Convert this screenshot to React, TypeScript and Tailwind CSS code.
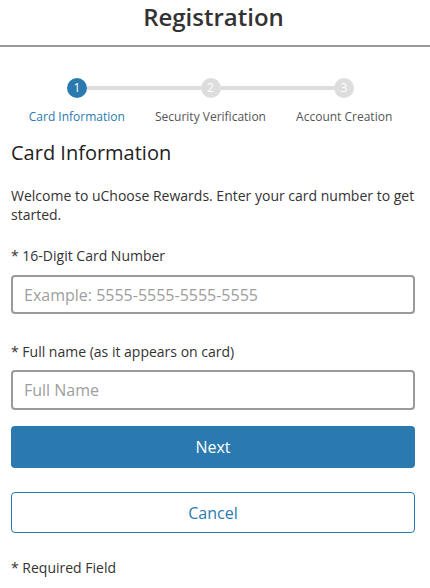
import React from "react";

function Step({ n, active }: { n: number; active?: boolean }) {
  return (
    <div
      className={
        "w-[20px] h-[20px] rounded-full flex items-center justify-center text-[12px] leading-none text-white shrink-0 " +
        (active ? "bg-[#2a7ab0]" : "bg-[#dddddd]")
      }
    >
      {n}
    </div>
  );
}

export default function App() {
  return (
    <div
      className="w-[430px] h-[588px] bg-white text-[#333333] overflow-hidden"
      style={{ fontFamily: '"Open Sans", "Noto Sans", sans-serif' }}
    >
      <div className="h-[47px] border-b-2 border-[#999999] flex justify-center pt-[1px] pr-[3px]">
        <h1 className="text-[24px] leading-[32px] font-semibold text-[#333333]">Registration</h1>
      </div>

      <div className="ml-[10px] w-[401px] mt-[31px]">
        <div className="flex items-center px-[57px]">
          <Step n={1} active />
          <div className="flex-1 h-[4px] bg-[#dddddd]" />
          <Step n={2} />
          <div className="flex-1 h-[4px] bg-[#dddddd]" />
          <Step n={3} />
        </div>
        <div className="grid grid-cols-3 mt-[11px] text-[12px] leading-[16px] text-center">
          <div className="text-[#2a7ab0]">Card Information</div>
          <div className="text-[#555555]">Security Verification</div>
          <div className="text-[#555555]">Account Creation</div>
        </div>
      </div>

      <div className="pl-[11px] pr-[15px]">
        <h2 className="mt-[14px] text-[20px] leading-[28px] font-normal text-[#222222]">Card Information</h2>
        <p className="mt-[18.5px] text-[14px] leading-[19px]">
          Welcome to uChoose Rewards. Enter your card number to get started.
        </p>

        <label className="block mt-[22.5px] text-[14px] leading-[19px]">* 16-Digit Card Number</label>
        <input
          className="block mt-[10px] w-full h-[39px] border-2 border-[#9a9a9a] rounded-[4px] px-[11px] text-[16px] text-[#333] placeholder:text-[#9e9e9e] outline-none"
          placeholder="Example: 5555-5555-5555-5555"
        />

        <label className="block mt-[27.5px] text-[14px] leading-[19px]">* Full name (as it appears on card)</label>
        <input
          className="block mt-[9.5px] w-full h-[39.5px] border-2 border-[#9a9a9a] rounded-[4px] px-[11px] text-[16px] text-[#333] placeholder:text-[#9e9e9e] outline-none"
          placeholder="Full Name"
        />

        <button
          className="block mt-[16.5px] w-full h-[42px] rounded-[4px] bg-[#2a7ab0] text-white text-[16px]"
          style={{ fontWeight: 500 }}
        >
          Next
        </button>

        <button className="block mt-[24px] w-full h-[41px] rounded-[4px] border border-[#2a7ab0] bg-white text-[#2a7ab0] text-[16px]">
          Cancel
        </button>

        <p className="mt-[25px] text-[14px] leading-[19px]">* Required Field</p>
      </div>
    </div>
  );
}
